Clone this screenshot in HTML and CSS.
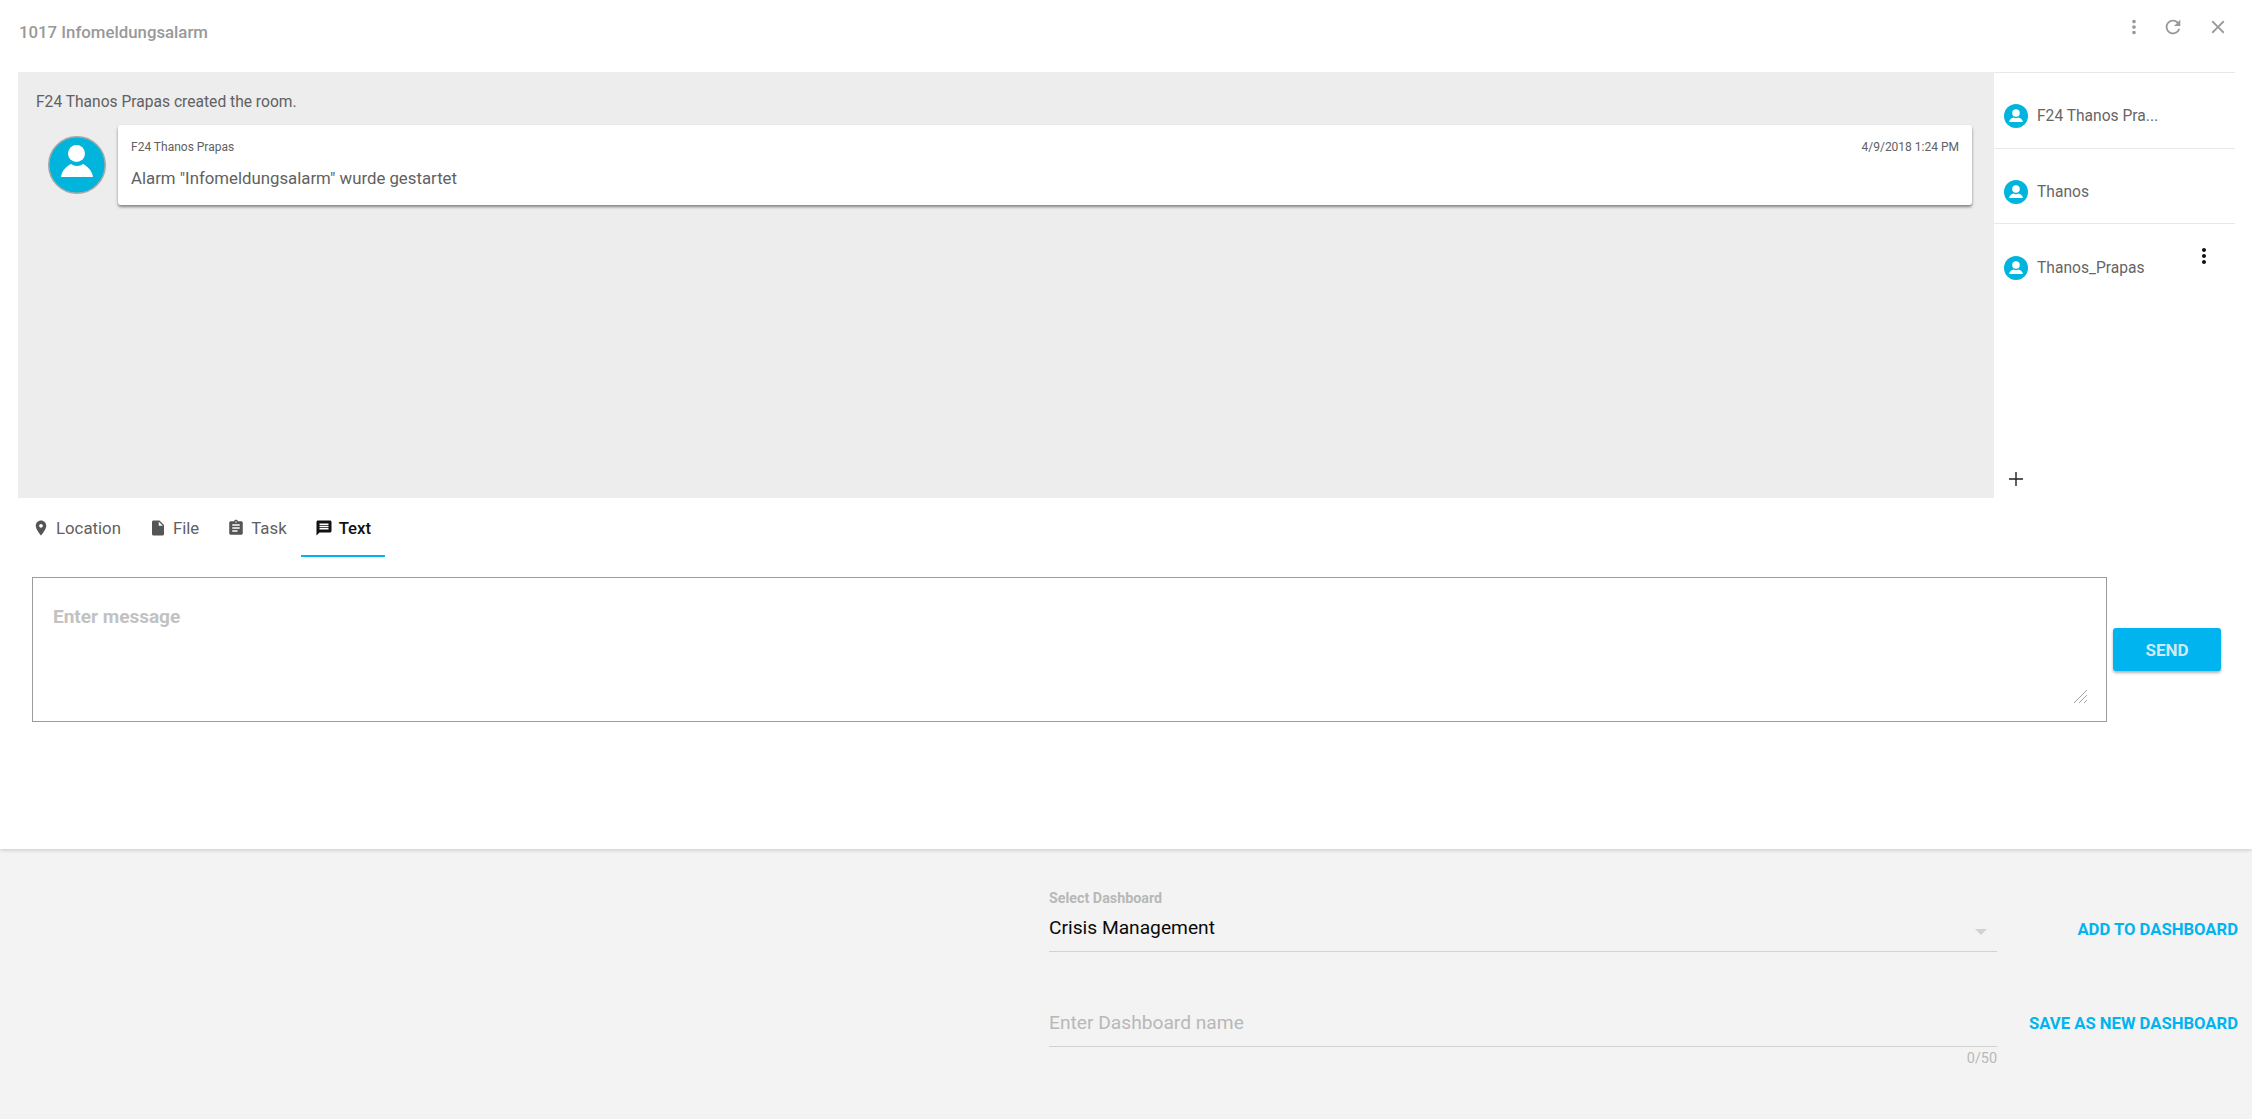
FILE: index.html
```html
<!DOCTYPE html>
<html lang="en">
<head>
<meta charset="utf-8">
<title>1017 Infomeldungsalarm</title>
<link rel="stylesheet" href="styles.css">
</head>
<body>
<main class="page">
  <section class="room">
    <header class="room-head">
      <h1 class="room-title">1017 Infomeldungsalarm</h1>
      <div class="head-actions">
        <svg class="head-icon" viewBox="0 0 24 24"><path d="M12 8c1.100 0 2-.9 2-2s-.9-2-2-2-2 .9-2 2 .9 2 2 2zm0 2c-1.100 0-2 .9-2 2s.9 2 2 2 2-.9 2-2-.9-2-2-2zm0 6c-1.100 0-2 .9-2 2s.9 2 2 2 2-.9 2-2-.9-2-2-2z"/></svg>
        <svg class="head-icon" viewBox="0 0 24 24"><path d="M17.650 6.350C16.200 4.900 14.210 4 12 4c-4.420 0-7.990 3.580-7.990 8s3.570 8 7.990 8c3.730 0 6.840-2.550 7.730-6h-2.080c-.82 2.330-3.040 4-5.650 4-3.310 0-6-2.690-6-6s2.690-6 6-6c1.660 0 3.140.69 4.220 1.780L13 11h7V4l-2.350 2.350z"/></svg>
        <svg class="head-icon head-close" viewBox="0 0 24 24"><path d="M19 6.410L17.590 5 12 10.590 6.410 5 5 6.410 10.590 12 5 17.590 6.410 19 12 13.410 17.590 19 19 17.590 13.410 12z"/></svg>
      </div>
    </header>
    <div class="chat-row">
      <div class="chat">
        <p class="chat-note">F24 Thanos Prapas created the room.</p>
        <div class="message">
          <svg class="avatar-large" viewBox="0 0 58 58"><circle cx="29" cy="29" r="28.250" fill="#00b4dc" stroke="#a8a8a8" stroke-width="1.500"/><circle cx="28.500" cy="17.500" r="8.500" fill="#fff"/><path d="M13 41C14 34 19 30 23 28 26 30.500 32 30.500 35 28 39 30 44 34 45 41z" fill="#fff"/></svg>
          <article class="card">
            <div class="card-meta"><span>F24 Thanos Prapas</span><span>4/9/2018 1:24 PM</span></div>
            <p class="card-text">Alarm "Infomeldungsalarm" wurde gestartet</p>
          </article>
        </div>
      </div>
      <aside class="members">
        <div class="member">
          <svg class="avatar" viewBox="0 0 24 24"><circle cx="12" cy="12" r="12" fill="#00b4dc"/><circle cx="12" cy="9" r="3.800" fill="#fff"/><path d="M5 18C5.500 15.500 7.500 14 9.500 13.500 11 14.500 13 14.500 14.500 13.500 16.500 14 18.500 15.500 19 18z" fill="#fff"/></svg>
          <span class="member-name">F24 Thanos Pra...</span>
        </div>
        <div class="member">
          <svg class="avatar" viewBox="0 0 24 24"><circle cx="12" cy="12" r="12" fill="#00b4dc"/><circle cx="12" cy="9" r="3.800" fill="#fff"/><path d="M5 18C5.500 15.500 7.500 14 9.500 13.500 11 14.500 13 14.500 14.500 13.500 16.500 14 18.500 15.500 19 18z" fill="#fff"/></svg>
          <span class="member-name">Thanos</span>
        </div>
        <div class="member member-last">
          <svg class="avatar" viewBox="0 0 24 24"><circle cx="12" cy="12" r="12" fill="#00b4dc"/><circle cx="12" cy="9" r="3.800" fill="#fff"/><path d="M5 18C5.500 15.500 7.500 14 9.500 13.500 11 14.500 13 14.500 14.500 13.500 16.500 14 18.500 15.500 19 18z" fill="#fff"/></svg>
          <span class="member-name">Thanos_Prapas</span>
          <svg class="member-menu" viewBox="0 0 24 24"><path d="M12 8c1.100 0 2-.9 2-2s-.9-2-2-2-2 .9-2 2 .9 2 2 2zm0 2c-1.100 0-2 .9-2 2s.9 2 2 2 2-.9 2-2-.9-2-2-2zm0 6c-1.100 0-2 .9-2 2s.9 2 2 2 2-.9 2-2-.9-2-2-2z"/></svg>
        </div>
        <svg class="add-member" viewBox="0 0 24 24"><path d="M19 12.700h-6.300V19h-1.400v-6.300H5v-1.400h6.300V5h1.400v6.300H19z"/></svg>
      </aside>
    </div>
    <nav class="tabs">
      <div class="tab">
        <svg class="tab-icon" viewBox="0 0 24 24"><path d="M12 2C8.130 2 5 5.130 5 9c0 5.250 7 13 7 13s7-7.750 7-13c0-3.870-3.130-7-7-7zm0 9.500c-1.380 0-2.500-1.120-2.500-2.500s1.120-2.500 2.500-2.500 2.500 1.120 2.500 2.500-1.120 2.500-2.500 2.500z"/></svg>Location
      </div>
      <div class="tab">
        <svg class="tab-icon" viewBox="0 0 24 24"><path d="M6 2c-1.100 0-1.990.9-1.990 2L4 20c0 1.100.89 2 1.990 2H18c1.100 0 2-.9 2-2V8l-6-6H6zm7 7V3.500L18.500 9H13z"/></svg>File
      </div>
      <div class="tab">
        <svg class="tab-icon" viewBox="0 0 24 24"><path d="M19 3h-4.180C14.400 1.840 13.300 1 12 1c-1.300 0-2.400.84-2.820 2H5c-1.100 0-2 .9-2 2v14c0 1.100.9 2 2 2h14c1.100 0 2-.9 2-2V5c0-1.100-.9-2-2-2zm-7 0c.55 0 1 .45 1 1s-.45 1-1 1-1-.45-1-1 .45-1 1-1zm2 14H7v-2h7v2zm3-4H7v-2h10v2zm0-4H7V7h10v2z"/></svg>Task
      </div>
      <div class="tab tab-active">
        <svg class="tab-icon" viewBox="0 0 24 24"><path d="M20 2H4c-1.100 0-1.990.9-1.990 2L2 22l4-4h14c1.100 0 2-.9 2-2V4c0-1.100-.9-2-2-2zm-2 12H6v-2h12v2zm0-3H6V9h12v2zm0-3H6V6h12v2z"/></svg>Text
      </div>
    </nav>
    <div class="composer">
      <div class="message-box">
        <textarea class="message-input" placeholder="Enter message"></textarea>
        <svg class="resize-grip" viewBox="0 0 13 13"><path d="M0 13L13 0M5 13L13 5M10 13L13 10" fill="none" stroke="#a0a0a0" stroke-width="1"/></svg>
      </div>
      <button class="send" type="button">SEND</button>
    </div>
  </section>
  <footer class="dash">
    <div class="dash-row dash-row-select">
      <div class="field">
        <span class="field-label">Select Dashboard</span>
        <div class="field-value"><span>Crisis Management</span><span class="caret"></span></div>
      </div>
      <button class="link-btn" type="button">ADD TO DASHBOARD</button>
    </div>
    <div class="dash-row dash-row-name">
      <div class="field">
        <input class="field-input" type="text" placeholder="Enter Dashboard name">
        <span class="field-count">0/50</span>
      </div>
      <button class="link-btn" type="button">SAVE AS NEW DASHBOARD</button>
    </div>
  </footer>
</main>
</body>
</html>
```
FILE: styles.css
```css
* { box-sizing: border-box; }
html, body { margin: 0; height: 100%; }
body { font-family: Roboto, "Liberation Sans", sans-serif; background: #fff; color: #616161; overflow: hidden; }
.page { display: flex; flex-direction: column; height: 1119px; }

.room { height: 849px; padding: 0 17px 0 18px; background: #fff; position: relative; z-index: 1; box-shadow: 0 1px 4px rgba(0,0,0,.18); flex: none; }
.room-head { height: 72px; display: flex; align-items: flex-start; justify-content: space-between; }
.room-title { margin: 22px 0 0 1px; font-size: 16.800px; line-height: 20px; font-weight: 500; color: #999; }
.head-actions { display: flex; align-items: center; gap: 17px; height: 24px; margin-top: 15px; margin-right: 6px; }
.head-icon { width: 22px; height: 22px; fill: #999; flex: none; }
.head-close { margin-left: 6px; }

.chat-row { display: flex; height: 426px; }
.chat { width: 1976px; background: #ededed; padding: 20px 22px 0 18px; flex: none; }
.chat-note { margin: 0 0 13px; font-size: 15.600px; line-height: 20px; color: #616161; }
.message { display: flex; gap: 12px; padding-left: 12px; align-items: flex-start; }
.avatar-large { width: 58px; height: 58px; margin-top: 11px; flex: none; }
.card { flex: 1; height: 80px; background: #fff; border-radius: 3px; padding: 14px 13px 0; box-shadow: 0 2px 3px rgba(0,0,0,.45); }
.card-meta { display: flex; justify-content: space-between; font-size: 12px; line-height: 16px; color: #616161; }
.card-text { margin: 13px 0 0; font-size: 16.800px; line-height: 20px; color: #616161; }

.members { flex: 1; position: relative; border-top: 1px solid #e6e8ea; }
.member { height: 75.500px; display: flex; align-items: center; padding: 12px 0 0 10px; border-bottom: 1px solid #e6e8ea; position: relative; }
.member-last { border-bottom: 0; }
.avatar { width: 24px; height: 24px; flex: none; margin-right: 9px; }
.member-name { font-size: 15.600px; color: #666; }
.member-menu { position: absolute; left: 198px; top: 20px; width: 24px; height: 24px; fill: #111; }
.add-member { position: absolute; left: 10px; bottom: 7px; width: 24px; height: 24px; fill: #222; }

.tabs { display: flex; height: 59px; }
.tab { display: flex; align-items: center; height: 59px; padding: 3px 14px 0; font-size: 16.800px; color: #616161; border-bottom: 2px solid transparent; }
.tab-icon { width: 18px; height: 18px; fill: #555; margin-right: 6px; flex: none; }
.tab-active { color: #111; font-weight: 500; border-bottom-color: #00b4ef; }
.tab-active .tab-icon { fill: #111; }

.composer { display: flex; align-items: center; gap: 6px; margin-top: 20px; padding-left: 14px; }
.message-box { width: 2075px; height: 145px; border: 1px solid #9c9c9c; padding: 28px 19px 18px 20px; display: flex; position: relative; }
.message-input { flex: 1; border: 0; outline: 0; padding: 0; resize: none; font-family: inherit; font-size: 19px; font-weight: 700; line-height: 22px; color: #333; background: transparent; }
.message-input::placeholder { color: #c2c2c2; opacity: 1; }
.resize-grip { position: absolute; right: 19px; bottom: 18px; width: 13px; height: 13px; }
.send { width: 108px; height: 43px; border: 0; border-radius: 3px; background: #00b4ef; color: #cfeaf6; font-family: inherit; font-size: 17px; font-weight: 700; box-shadow: 0 2px 3px rgba(0,0,0,.3); padding: 0; }

.dash { flex: 1; background: #f3f3f3; padding: 0 14px 0 1049px; display: flex; flex-direction: column; }
.dash-row { display: flex; justify-content: space-between; }
.dash-row-select { margin-top: 41px; height: 62px; }
.dash-row-name { margin-top: 50px; }
.field { width: 948px; position: relative; }
.field-label { display: block; font-size: 14.300px; line-height: 16px; font-weight: 700; color: #b8b8b8; }
.field-value { height: 46px; display: flex; justify-content: space-between; align-items: center; padding: 0 10px 3px 0; border-bottom: 1px solid #d2d2d2; font-size: 19.200px; color: #0a0a0a; }
.caret { width: 0; height: 0; border-left: 6px solid transparent; border-right: 6px solid transparent; border-top: 6px solid #d2d2d2; margin-top: 9px; }
.field-input { display: block; width: 100%; height: 45px; border: 0; border-bottom: 1px solid #d2d2d2; outline: 0; padding: 0 0 3px; background: transparent; font-family: inherit; font-size: 19.200px; color: #333; }
.field-input::placeholder { color: #b8b8b8; opacity: 1; }
.field-count { display: block; text-align: right; font-size: 14.400px; line-height: 16px; margin-top: 4px; color: #b8b8b8; }
.link-btn { border: 0; background: transparent; padding: 0; height: 22px; margin-top: 28px; color: #00b4ef; font-family: inherit; font-size: 16.650px; font-weight: 700; }
.dash-row-name .link-btn { margin-top: 10px; }
```
